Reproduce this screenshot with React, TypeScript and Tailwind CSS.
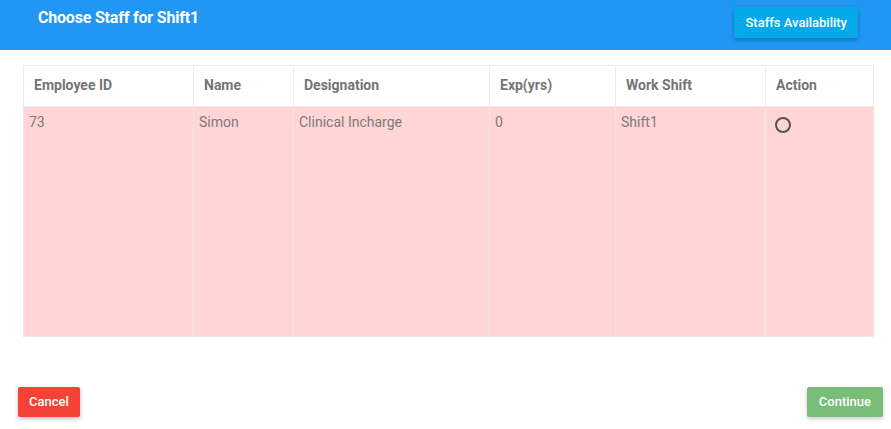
export default function App() {
  const cols = [
    { label: "Employee ID", w: 170 },
    { label: "Name", w: 100 },
    { label: "Designation", w: 196 },
    { label: "Exp(yrs)", w: 126 },
    { label: "Work Shift", w: 150 },
    { label: "Action", w: 108 },
  ];
  const row = ["73", "Simon", "Clinical Incharge", "0", "Shift1"];

  return (
    <div className="w-[891px] h-[429px] bg-white font-['Roboto',sans-serif] flex flex-col">
      <header className="h-[50px] bg-[#2196f3] flex items-start justify-between pl-[38px] pr-[33px]">
        <h1 className="text-white font-bold text-[16px] leading-none mt-[10px] tracking-[-0.2px]">
          Choose Staff for Shift1
        </h1>
        <button className="mt-[7px] h-[31px] px-[11px] bg-[#03a9e8] text-white text-[13px] font-medium rounded-[2px] shadow-[0_2px_4px_rgba(0,0,0,0.25)]">
          Staffs Availability
        </button>
      </header>

      <div className="pl-[23px] pr-[18px] pt-[15px]">
        <table className="table-fixed w-[850px] border-collapse border border-[#ececec]">
          <colgroup>
            {cols.map((c) => (
              <col key={c.label} style={{ width: c.w }} />
            ))}
          </colgroup>
          <thead>
            <tr className="h-[41px]">
              {cols.map((c) => (
                <th
                  key={c.label}
                  className="text-left align-middle pl-[10px] pb-[2px] text-[14px] font-bold text-[#757575] border border-[#ececec]"
                >
                  {c.label}
                </th>
              ))}
            </tr>
          </thead>
          <tbody>
            <tr className="h-[230px] bg-[#ffd5d5]">
              {row.map((v, i) => (
                <td
                  key={i}
                  className="align-top pl-[5px] pt-[5px] text-[14px] text-[#7b7b7b] border border-[#f5e4e4]"
                >
                  {v}
                </td>
              ))}
              <td className="align-top pl-[9px] pt-[10px] border border-[#f5e4e4]">
                <span className="block w-[16px] h-[16px] rounded-full border-2 border-[#555]" />
              </td>
            </tr>
          </tbody>
        </table>
      </div>

      <div className="flex justify-between pl-[18px] pr-[8px] mt-[50px]">
        <button className="h-[30px] px-[11px] bg-[#f44336] text-white text-[13px] font-medium rounded-[2px] shadow-[0_2px_4px_rgba(0,0,0,0.25)]">
          Cancel
        </button>
        <button className="h-[30px] px-[12px] bg-[#78bd78] text-white text-[13px] font-medium rounded-[2px] shadow-[0_2px_4px_rgba(0,0,0,0.2)]">
          Continue
        </button>
      </div>
    </div>
  );
}
